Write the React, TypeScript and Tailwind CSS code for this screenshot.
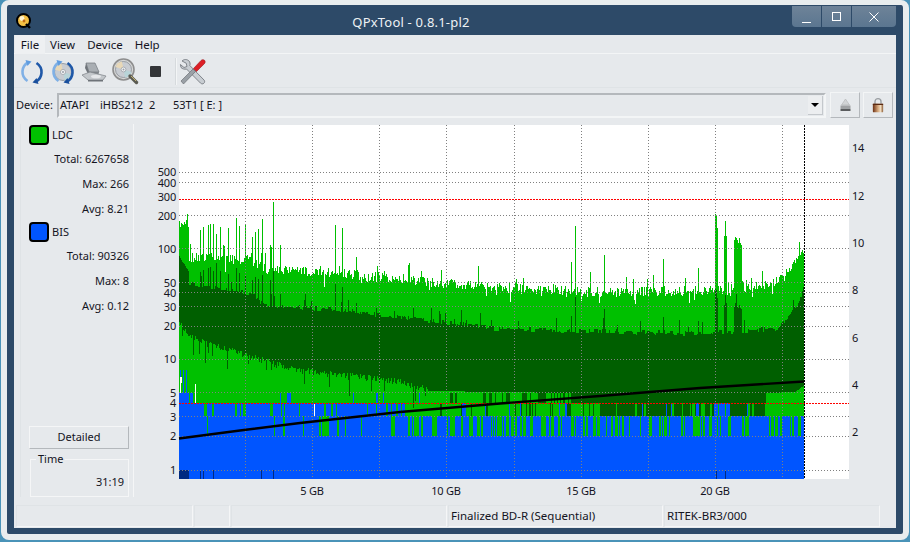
import { ReactNode } from 'react';

const FONT = "font-['Noto_Sans',sans-serif]";

// seeded random so the graph stays the same between runs
let seed = 4711;
function rnd() {
    seed = (seed * 16807) % 2147483647;
    return seed / 2147483647;
}

function interp(table: number[][], x: number) {
    for (let i = 1; i < table.length; i++) {
        if (x <= table[i][0]) {
            const [x0, y0] = table[i - 1];
            const [x1, y1] = table[i];
            return y0 + ((y1 - y0) * (x - x0)) / (x1 - x0 || 1);
        }
    }
    return table[table.length - 1][1];
}

const envTable = [[179, 224], [188, 224], [189, 257], [250, 260], [262, 268], [300, 270], [400, 279], [500, 288], [600, 292], [700, 291], [770, 285], [785, 275], [795, 262], [804, 248]];
const darkTopTable = [[179, 256], [188, 272], [189, 283], [220, 288], [255, 295], [263, 305], [330, 309], [400, 317], [500, 329], [600, 331], [700, 334], [775, 329], [790, 316], [800, 298], [804, 284]];
const darkBotTable = [[179, 322], [190, 337], [210, 345], [245, 355], [275, 364], [300, 370], [400, 382], [430, 391], [570, 393], [571, 403], [765, 403], [766, 393], [795, 392], [804, 385]];

const spikes: Record<number, number> = {
    200: 230, 203: 227, 208: 225, 210: 224, 213: 224, 216: 234, 220: 227, 228: 228, 236: 218, 239: 226, 245: 225,
    252: 237, 255: 232, 258: 229, 262: 219, 270: 245, 271: 247, 273: 202, 280: 245, 335: 225, 342: 228, 356: 257,
    575: 226, 571: 262, 604: 255, 663: 259, 698: 268, 715: 214, 716: 216, 717: 228, 725: 221, 724: 236, 726: 236,
    734: 240, 735: 237, 736: 238, 737: 240, 738: 243, 739: 238, 740: 243, 741: 245,
};
const deepLines = [200, 203, 213, 261, 273, 716, 725];
const whiteLines: number[][] = [[180, 377, 393], [181, 377, 383], [195, 384, 403], [314, 403, 416]];

function buildGraph() {
    const light: string[] = [];
    const dark: string[] = [];
    const blue: string[] = [];
    const deep: string[] = [];
    const seg = (list: string[], x: number, a: number, b: number) => list.push(`M${x + 0.5} ${Math.round(a)}V${Math.round(b)}`);
    let bandA = 0;
    let bandB = 0;
    let bandC = 0;
    let holdTop = 0;
    for (let x = 179; x < 804; x++) {
        let top = interp(envTable, x) + (rnd() - 0.5) * (x < 189 ? 6 : 10);
        if (rnd() < (x < 262 ? 0.1 : 0.05)) top -= 6 + rnd() * 12;
        if (rnd() < 0.05) top += 5 + rnd() * 6;
        if (rnd() < 0.5) holdTop = (rnd() - 0.5) * 5;
        let dt = interp(darkTopTable, x) + holdTop;
        if (rnd() < 0.04) dt -= 4 + rnd() * 10;
        const s = spikes[x];
        if (s) {
            dt -= (interp(envTable, x) - s) * 0.55;
            top = s;
        }
        let db = interp(darkBotTable, x) + (x < 430 ? (rnd() - 0.5) * 7 : 0);
        if (x < 430 && rnd() < 0.08) db += 6 + rnd() * 14;
        seg(light, x, top, 479);
        seg(dark, x, dt, db);

        // band 5..4
        if (rnd() > 0.3) bandA = rnd();
        if (x < 189 || (x < 420 && bandA < 0.06)) {
            seg(blue, x, x < 189 && x % 3 === 0 ? 370 : 393, 403);
        } else if (x >= 420 && x < 765 && bandA < (x - 420) / 420) {
            seg(dark, x, 393, 403);
        }

        // band 4..3
        if (rnd() > 0.3) bandB = rnd();
        if (x < 405) {
            if (bandB < 0.85) seg(blue, x, 403, 416);
        } else if (x < 600) {
            if (bandB < 0.08) seg(blue, x, 403, 416);
            else if (bandB < 0.08 + ((x - 405) / 195) * 0.3) seg(dark, x, 403, 416);
        } else if (x < 765) {
            if (bandB < 0.06 || (x > 712 && x < 730 && bandB < 0.7)) seg(blue, x, 403, 416);
            else if (bandB < 0.85) seg(dark, x, 403, 416);
        }

        // band 3..2
        if (rnd() > 0.3) bandC = rnd();
        const keep = x < 300 ? 0.97 : x < 405 ? 0.88 : x < 650 ? 0.6 : 0.72;
        if (bandC < keep) seg(blue, x, 416, 436);

        seg(blue, x, 436, 470);
        seg(x < 189 || deepLines.includes(x) ? deep : blue, x, 470, 479);
    }
    return { light: light.join(''), dark: dark.join(''), blue: blue.join(''), deep: deep.join('') };
}

const graph = buildGraph();

const leftTicks = [
    ['500', 172], ['400', 183], ['300', 197], ['200', 216], ['100', 249], ['50', 283], ['40', 293], ['30', 307],
    ['20', 326], ['10', 359], ['5', 393], ['4', 403], ['3', 417], ['2', 436], ['1', 470],
] as const;
const rightTicks = [['14', 148], ['12', 196], ['10', 243], ['8', 290], ['6', 338], ['4', 385], ['2', 432]] as const;
const gridY = [172.5, 182.5, 215.5, 248.5, 282.5, 292.5, 306.5, 326.5, 359.5, 392.5, 416.5, 436.5, 470.5];
const gridX = [245.5, 312.5, 379.5, 446.5, 514.5, 581.5, 648.5, 715.5, 782.5];

function Chart() {
    return (
        <svg width={746} height={386} viewBox="134 119 746 386" className="shrink-0">
            <rect x={179} y={125} width={670} height={354} fill="#ffffff" />
            <g fill="none" strokeWidth={1} shapeRendering="crispEdges">
                <path d={graph.light} stroke="#00c000" />
                <path d={graph.dark} stroke="#005f00" />
                <path d={graph.blue} stroke="#0055ff" />
                <path d={graph.deep} stroke="#002a80" />
                {whiteLines.map(([x, a, b]) => (
                    <path key={x} d={`M${x + 0.5} ${a}V${b}`} stroke="#ffffff" />
                ))}
                {gridY.map((y) => (
                    <path key={y} d={`M179 ${y}H849`} stroke="#808080" strokeDasharray="1 2" />
                ))}
                {gridX.map((x) => (
                    <path key={x} d={`M${x} 125V479`} stroke="#808080" strokeDasharray="1 2" />
                ))}
                <line x1={179} y1={199.5} x2={849} y2={199.5} stroke="#ff0000" strokeDasharray="2 1" />
                <line x1={179} y1={403.5} x2={849} y2={403.5} stroke="#ff0000" strokeDasharray="2 1" />
                <path d="M804.5 125V479" stroke="#000000" strokeDasharray="2 1" />
            </g>
            <polyline
                points="179,438.5 240,430.5 300,423 400,412 500,403.5 600,396 700,388 804,381.5"
                fill="none"
                stroke="#000000"
                strokeWidth={2.4}
            />
            <g fontSize={11} letterSpacing={-0.2} fill="#14141e" style={{ fontFamily: "'Noto Sans', sans-serif" }}>
                {leftTicks.map(([label, y]) => (
                    <text key={label} x={176} y={y + 4} textAnchor="end">{label}</text>
                ))}
                {rightTicks.map(([label, y]) => (
                    <text key={label} x={852} y={y + 4}>{label}</text>
                ))}
                <text x={312} y={495} textAnchor="middle">5 GB</text>
                <text x={446} y={495} textAnchor="middle">10 GB</text>
                <text x={581} y={495} textAnchor="middle">15 GB</text>
                <text x={715} y={495} textAnchor="middle">20 GB</text>
            </g>
        </svg>
    );
}

function AppLogo() {
    return (
        <svg width="16" height="16" viewBox="0 0 16 16">
            <circle cx="7.5" cy="7.5" r="6.5" fill="#f4c044" stroke="#000000" strokeWidth="2" />
            <circle cx="6" cy="5.5" r="2.4" fill="#fff4d0" />
            <circle cx="8" cy="8" r="1.4" fill="#c06a18" />
            <path d="M10 11l4 4" stroke="#000000" strokeWidth="2.4" />
        </svg>
    );
}

function Arcs() {
    return (
        <g>
            <path d="M9 3.500C2.500 7 1 17 8.500 22" fill="none" stroke="#7fb0e6" strokeWidth="2.600" />
            <path d="M6.500 1l6 1.500-4 4.500z" fill="#5f9ce0" />
            <path d="M17 22.500C23.500 19 25 9 17.500 4" fill="none" stroke="#1f58a8" strokeWidth="2.600" />
            <path d="M19.500 25l-6-1.500 4-4.500z" fill="#1a4f9c" />
        </g>
    );
}

function DiscShape({ cx, cy, r }: { cx: number; cy: number; r: number }) {
    return (
        <g>
            <circle cx={cx} cy={cy} r={r} fill="#c8ccd2" stroke="#8a8f96" strokeWidth="0.8" />
            <path d={`M${cx} ${cy}L${cx - r} ${cy - r * 0.3}A${r} ${r} 0 0 1 ${cx - r * 0.2} ${cy - r}z`} fill="#e8d8b8" />
            <path d={`M${cx} ${cy}L${cx + r} ${cy + r * 0.3}A${r} ${r} 0 0 1 ${cx + r * 0.2} ${cy + r}z`} fill="#b8d4d8" />
            <circle cx={cx} cy={cy} r={r * 0.3} fill="#f2f3f5" stroke="#8a8f96" strokeWidth="0.6" />
            <circle cx={cx} cy={cy} r={r * 0.12} fill="#9aa0a8" />
        </g>
    );
}

function RefreshIcon() {
    return (
        <svg width="26" height="26" viewBox="0 0 26 26"><Arcs /></svg>
    );
}

function DiscRefreshIcon() {
    return (
        <svg width="26" height="26" viewBox="0 0 26 26">
            <DiscShape cx={13} cy={13} r={8.5} />
            <Arcs />
        </svg>
    );
}

function DriveIcon() {
    return (
        <svg width="28" height="22" viewBox="0 0 28 22">
            <path d="M6 2h9l4 9H9z" fill="#a9aeb3" stroke="#73787e" strokeWidth="0.7" />
            <path d="M6 2l3 9v4L5 7z" fill="#6e7379" />
            <path d="M9 11h10l-1 4H9z" fill="#7f848a" />
            <path d="M2 14l8-3 16 4-3 4H8z" fill="#c3c7cb" stroke="#7c8187" strokeWidth="0.7" />
            <path d="M8 19h15v1.500H8z" fill="#6e7379" />
            <ellipse cx="16" cy="15.500" rx="5" ry="1.800" fill="#e5e7ea" />
        </svg>
    );
}

function ScanIcon() {
    return (
        <svg width="27" height="27" viewBox="0 0 27 27">
            <circle cx="11.500" cy="11.500" r="10.500" fill="#d5d6d6" stroke="#8e8e8e" strokeWidth="1.600" />
            <DiscShape cx={11.5} cy={11.5} r={8} />
            <path d="M18 18l6.500 6.500" stroke="#5b5b52" strokeWidth="3.400" strokeLinecap="round" />
            <path d="M19 18l5 5" stroke="#c0b070" strokeWidth="1" />
        </svg>
    );
}

function ToolsIcon() {
    return (
        <svg width="28" height="27" viewBox="0 0 28 27">
            <path d="M3 3c2-2 5-2 7 0 1 1 1.500 3 .8 4.500L25 22c1 1 .8 2.500-.2 3.300-1 .9-2.300.7-3.300-.2L7.500 11C5.500 11.500 3.500 11 2 9.500l-.6-3L5 9.500l3-1-.8-3.300z" fill="#c8cdd2" stroke="#6b7076" strokeWidth="0.8" />
            <path d="M2 23l12-12 2.500 2.500L4.500 26z" fill="#9aa0a6" stroke="#5f646a" strokeWidth="0.6" />
            <path d="M14.500 10.500L22 2.500c1-1 2.500-1.200 3.500-.2s.8 2.500-.2 3.500l-7.800 7.700z" fill="#dd1f26" stroke="#9a1016" strokeWidth="0.6" />
        </svg>
    );
}

function EjectIcon() {
    return (
        <svg width="11" height="14" viewBox="0 0 11 14">
            <path d="M5.500 1l4 6h-8z" fill="#d2d4d6" stroke="#b0b2b4" strokeWidth="0.6" />
            <path d="M0.500 7.500h10V10H0.500z" fill="#a0a2a4" />
            <path d="M0.500 10.500h10V13H0.500z" fill="#5a5c5e" />
        </svg>
    );
}

function LockIcon() {
    return (
        <svg width="12" height="16" viewBox="0 0 14 17">
            <defs>
                <linearGradient id="lockBody" x1="0" x2="1" y1="0" y2="0">
                    <stop offset="0" stopColor="#6a2e12" />
                    <stop offset="0.5" stopColor="#d6a87c" />
                    <stop offset="0.75" stopColor="#f0dcc0" />
                    <stop offset="1" stopColor="#8a5a34" />
                </linearGradient>
            </defs>
            <path d="M3.500 8V4.500a3.500 3.500 0 0 1 7 0V8" fill="none" stroke="#9a9ea2" strokeWidth="1.600" />
            <rect x="1" y="7" width="12" height="10" rx="1" fill="url(#lockBody)" />
            <rect x="1" y="7" width="12" height="1.500" fill="#5a2a12" />
        </svg>
    );
}

function WindowButton({ width, children }: { width: string; children: ReactNode }) {
    return (
        <div className={`flex h-[21px] items-center justify-center bg-gradient-to-b from-[#6e8398] to-[#5b7690] ${width}`}>
            {children}
        </div>
    );
}

function StatLine({ children }: { children: ReactNode }) {
    return <div className="flex h-[25px] items-center justify-end pr-[3px] text-[11px]">{children}</div>;
}

function Swatch({ color, label }: { color: string; label: string }) {
    return (
        <div className="flex h-[22px] items-start gap-[3px]">
            <div className={`h-5 w-5 rounded-[4px] border-2 border-black ${color}`} />
            <span className="text-[11px] leading-5">{label}</span>
        </div>
    );
}

export default function App() {
    return (
        <div className={`h-[542px] w-[910px] overflow-hidden bg-[#4a93b8] pb-[2px] text-[11.5px] text-[#14141e] ${FONT}`}>
            <div className="ml-px mr-px h-full rounded-lg border-x-[6px] border-b-[6px] border-t-[5px] border-[#e9edee] bg-[#2d4a68]">
                <div className="flex h-full flex-col rounded px-[7px] pb-[6px]">
                    {/* Title bar */}
                    <div className="flex h-[30px] shrink-0 items-start">
                        <div className="mt-[8px] ml-[2px]">
                            <AppLogo />
                        </div>
                        <div className="mt-[8px] flex-1 pr-[2px] text-center text-[13px] tracking-[0.2px] text-[#eef2f5]">
                            QPxTool - 0.8.1-pl2
                        </div>
                        <div className="mt-px flex gap-px overflow-hidden rounded-b-[4px]">
                            <WindowButton width="w-[29px]">
                                <div className="mt-[11px] h-px w-[9px] bg-white" />
                            </WindowButton>
                            <WindowButton width="w-[29px]">
                                <div className="h-[9px] w-[9px] border border-white" />
                            </WindowButton>
                            <WindowButton width="w-[44px]">
                                <svg width="10" height="10" viewBox="0 0 10 10" stroke="#ffffff" strokeWidth="1">
                                    <path d="M0.500 0.500l9 9M9.500 0.500l-9 9" />
                                </svg>
                            </WindowButton>
                        </div>
                    </div>

                    <div className="flex min-h-0 flex-1 flex-col bg-[#e6e9ec]">
                        {/* Menu */}
                        <div className="flex h-[19px] shrink-0 items-center border-b border-[#f3f5f6] pl-px">
                            <span className="flex h-[19px] w-[30px] items-center justify-center bg-[#eef0f2] pt-px">File</span>
                            <span className="ml-[5px] pt-px">View</span>
                            <span className="ml-[12px] pt-px">Device</span>
                            <span className="ml-[12px] pt-px">Help</span>
                        </div>

                        {/* Toolbar */}
                        <div className="flex h-[34px] shrink-0 items-center border-b border-[#dfe3e6] pl-[5px] pt-[2px]">
                            <RefreshIcon />
                            <div className="ml-[5px]"><DiscRefreshIcon /></div>
                            <div className="ml-[4px]"><DriveIcon /></div>
                            <div className="ml-[4px]"><ScanIcon /></div>
                            <div className="ml-[11px] h-[11px] w-[11px] rounded-[1px] bg-[#333538]" />
                            <div className="ml-[14px] h-[27px] w-[2px] border-l border-[#d6dadd] bg-[#f3f5f6]" />
                            <div className="ml-[2px]"><ToolsIcon /></div>
                        </div>

                        {/* Device row */}
                        <div className="flex h-[31px] shrink-0 items-center pl-[2px] pt-[3px] text-[11px]">
                            <span className="w-[39px]">Device:</span>
                            <div className="ml-[2px] flex h-[25px] w-[769px] items-center border-2 border-[#b4b8bc] border-r-[#f3f5f6] border-b-[#f3f5f6] pl-px">
                                <span className="w-[40px]">ATAPI</span>
                                <span className="w-[49px]">iHBS212</span>
                                <span className="w-[24px]">2</span>
                                <span className="w-[27px]">53T1</span>
                                <span>[ E: ]</span>
                                <div className="ml-auto mr-[1px] flex h-[19px] w-[15px] items-center justify-center border-r border-b border-[#c4c8cc] bg-[#eceef0]">
                                    <div className="h-0 w-0 border-x-[4px] border-t-[4px] border-x-transparent border-t-black" />
                                </div>
                            </div>
                            <div className="ml-[4px] flex h-[26px] w-[30px] items-center justify-center border border-[#f3f5f6] border-r-[#b4b8bc] border-b-[#b4b8bc]">
                                <EjectIcon />
                            </div>
                            <div className="ml-[3px] flex h-[26px] w-[30px] items-center justify-center border border-[#f3f5f6] border-r-[#b4b8bc] border-b-[#b4b8bc]">
                                <LockIcon />
                            </div>
                        </div>

                        {/* Main */}
                        <div className="flex min-h-0 flex-1 pl-[6px]">
                            <div className="mt-[5px] mb-[8px] flex w-[114px] shrink-0 flex-col border-r border-l border-r-[#f5f6f7] border-l-[#dfe3e6] pl-[8px] pr-px pt-px">
                                <Swatch color="bg-[#00c000]" label="LDC" />
                                <StatLine>Total: 6267658</StatLine>
                                <StatLine>Max: 266</StatLine>
                                <StatLine>Avg: 8.21</StatLine>
                                <Swatch color="bg-[#0055ff]" label="BIS" />
                                <StatLine>Total: 90326</StatLine>
                                <StatLine>Max: 8</StatLine>
                                <StatLine>Avg: 0.12</StatLine>
                                <div className="flex-1" />
                                <div className="flex h-[23px] w-[100px] items-center justify-center border border-[#f5f6f7] border-r-[#b4b8bc] border-b-[#b4b8bc] text-[11px]">
                                    Detailed
                                </div>
                                <fieldset className="ml-px mt-[2px] h-[46px] w-[99px] border border-[#f5f6f7] pr-[4px] text-right text-[11px]">
                                    <legend className="ml-[5px] px-[2px] text-left leading-[16px]">Time</legend>
                                    <div className="mt-[7px]">31:19</div>
                                </fieldset>
                            </div>
                            <Chart />
                        </div>

                        {/* Status bar */}
                        <div className="flex h-[23px] shrink-0 px-[2px] pb-px">
                            {[
                                ['w-[177px]', ''],
                                ['w-[36px]', ''],
                                ['w-[216px]', ''],
                                ['w-[215px]', 'Finalized BD-R (Sequential)'],
                                ['w-[216px]', 'RITEK-BR3/000'],
                            ].map(([w, text], i) => (
                                <div key={i} className={`mr-px flex items-center border border-[#dfe3e6] border-r-[#f5f6f7] border-b-[#f5f6f7] pl-[2px] ${w}`}>
                                    {text}
                                </div>
                            ))}
                        </div>
                    </div>
                </div>
            </div>
        </div>
    );
}
